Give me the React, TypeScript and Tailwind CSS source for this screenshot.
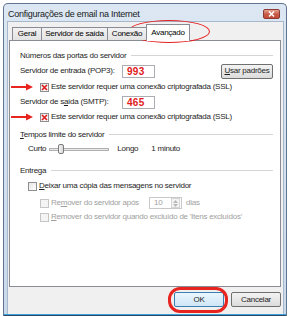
import React from "react";

const font = { fontFamily: '"Liberation Sans", Arial, sans-serif' };

function Check({ checked, disabled }: { checked?: boolean; disabled?: boolean }) {
  return (
    <span
      className={
        "flex h-[9px] w-[9px] shrink-0 items-center justify-center border " +
        (disabled ? "border-[#c5c5c5] bg-[#f4f4f4]" : "border-[#8e8f8f] bg-gradient-to-br from-[#e6e6e6] to-[#ffffff]")
      }
    >
      {checked && (
        <svg width="7" height="7" viewBox="0 0 7 7">
          <path d="M1 1 L6 6 M6 1 L1 6" stroke="#e01b1b" strokeWidth="1.6" />
        </svg>
      )}
    </span>
  );
}

function Arrow({ top }: { top: number }) {
  return (
    <svg className="absolute left-[11px]" style={{ top }} width="24" height="8" viewBox="0 0 24 8">
      <path d="M0 4 H17" stroke="#e8241f" strokeWidth="2" />
      <path d="M15 0.5 L22 4 L15 7.5 Z" fill="#e8241f" />
    </svg>
  );
}

function Header({ text, underline }: { text: string; underline?: boolean }) {
  return (
    <div className="flex h-[12px] items-center gap-[5px] text-[#1e1e1e]">
      <span className="whitespace-nowrap">
        {underline ? (
          <>
            <span className="underline">{text[0]}</span>
            {text.slice(1)}
          </>
        ) : (
          text
        )}
      </span>
      <span className="h-[2px] flex-1 border-t border-b border-t-[#d5d5d5] border-b-white" />
    </div>
  );
}

function Win7Button({ label, primary, u }: { label: string; primary?: boolean; u?: boolean }) {
  return (
    <button
      className={
        "flex h-[15px] w-full items-center justify-center rounded-[2px] border text-[8px] text-[#1e1e1e] " +
        (primary
          ? "border-[#3c7fb1] bg-gradient-to-b from-[#eaf6fd] to-[#cfe6f6]"
          : "border-[#707070] bg-gradient-to-b from-[#f3f3f3] to-[#dcdcdc]")
      }
    >
      {u ? (
        <>
          <span className="underline">{label[0]}</span>
          {label.slice(1)}
        </>
      ) : (
        label
      )}
    </button>
  );
}

export default function App() {
  return (
    <div
      className="relative h-[316px] w-[290px] overflow-hidden bg-white pl-[3px] pt-[3px] text-[8px] tracking-[-0.25px]"
      style={font}
    >
      <div className="flex h-[313px] w-[284px] flex-col rounded-t-[5px] border border-b-0 border-[#5f7590] bg-gradient-to-b from-[#dce7f3] to-[#c9d9ec]">
        {/* title bar */}
        <div className="flex h-[17px] shrink-0 items-start">
          <span className="ml-[4px] mt-[5px] text-[9px] leading-[11px] text-[#1a1a1a]">
            Configurações de email na Internet
          </span>
          <span className="ml-auto mr-[6px] mt-[5px] flex h-[10px] w-[17px] items-center justify-center rounded-[2px] border border-[#8a3b34] bg-gradient-to-b from-[#e8a493] via-[#c75b48] to-[#c44a35]">
            <svg width="7" height="6" viewBox="0 0 7 6">
              <path d="M1 0.5 L6 5.5 M6 0.5 L1 5.5" stroke="white" strokeWidth="1.5" />
            </svg>
          </span>
        </div>

        {/* client */}
        <div className="ml-[3px] mr-[2px] flex flex-1 flex-col border border-b-0 border-[#a7b8cc] bg-[#f0f0f0] pl-[1px]">
          {/* tabs */}
          <div className="relative z-10 ml-[3px] mt-[2px] flex h-[16px] items-end">
            <div className="flex h-[13px] w-[30px] items-center justify-center border border-b-0 border-[#898c95] bg-gradient-to-b from-[#f2f2f2] to-[#e3e3e3]">
              Geral
            </div>
            <div className="-ml-[1px] flex h-[13px] w-[67px] items-center justify-center border border-b-0 border-[#898c95] bg-gradient-to-b from-[#f2f2f2] to-[#e3e3e3]">
              Servidor de saída
            </div>
            <div className="-ml-[1px] flex h-[13px] w-[40px] items-center justify-center border border-b-0 border-[#898c95] bg-gradient-to-b from-[#f2f2f2] to-[#e3e3e3]">
              Conexão
            </div>
            <div className="-mb-[1px] -ml-[1px] flex h-[17px] w-[44px] items-center justify-center border border-b-0 border-[#898c95] bg-white pb-[1px]">
              Avançado
            </div>
          </div>

          {/* panel */}
          <div className="flex h-[247px] w-[272px] flex-col border border-[#898c95] bg-white pl-[10px] pr-[7px] text-[#1e1e1e]">
            <div className="mt-[9px]">
              <Header text="Números das portas do servidor" />
            </div>

            <div className="mt-[2px] flex h-[14px] items-center">
              <span className="w-[102px] whitespace-nowrap">Servidor de entrada (POP3):</span>
              <span className="flex h-[13px] w-[33px] items-center border border-[#abadb3] pl-[4px] text-[10px] font-bold tracking-[0.3px] text-[#e01b1b]">
                993
              </span>
              <div className="ml-auto w-[52px]">
                <Win7Button label="Usar padrões" u />
              </div>
            </div>

            <div className="mt-[3px] flex h-[12px] items-center gap-[2px] pl-[20px]">
              <Check checked />
              <span className="whitespace-nowrap">Este servidor requer uma conexão criptografada (SSL)</span>
            </div>

            <div className="mt-[2px] flex h-[14px] items-center">
              <span className="w-[102px] whitespace-nowrap">
                Servidor de s<span className="underline">a</span>ída (SMTP):
              </span>
              <span className="flex h-[13px] w-[33px] items-center border border-[#abadb3] pl-[4px] text-[10px] font-bold tracking-[0.3px] text-[#e01b1b]">
                465
              </span>
            </div>

            <div className="mt-[2px] flex h-[12px] items-center gap-[2px] pl-[20px]">
              <Check checked />
              <span className="whitespace-nowrap">Este servidor requer uma conexão criptografada (SSL)</span>
            </div>

            <div className="mt-[6px]">
              <Header text="Tempos limite do servidor" underline />
            </div>

            <div className="mt-[2px] flex h-[12px] items-center pl-[8px]">
              <span>Curto</span>
              <div className="relative ml-[3px] flex h-[12px] w-[60px] items-center">
                <span className="h-[3px] w-full border border-[#b0b0b0] bg-[#e7e7e7]" />
                <span className="absolute left-[9px] top-[1px] h-[10px] w-[6px] rounded-[2px] border border-[#7b7b7b] bg-gradient-to-r from-[#f5f5f5] to-[#d8d8d8]" />
              </div>
              <span className="ml-[8px] w-[34px]">Longo</span>
              <span>1 minuto</span>
            </div>

            <div className="mt-[10px]">
              <Header text="Entrega" />
            </div>

            <div className="mt-[3px] flex h-[12px] items-center gap-[2px] pl-[8px]">
              <Check />
              <span className="whitespace-nowrap">
                <span className="underline">D</span>eixar uma cópia das mensagens no servidor
              </span>
            </div>

            <div className="mt-[5px] flex h-[12px] items-center gap-[2px] pl-[20px] text-[#a0a0a0]">
              <Check disabled />
              <span className="w-[96px] whitespace-nowrap">
                Re<span className="underline">m</span>over do servidor após
              </span>
              <span className="flex h-[12px] w-[33px] items-center border border-[#c8c8c8] pl-[4px]">
                <span className="flex-1">10</span>
                <span className="mr-[1px] flex h-[10px] w-[9px] flex-col border border-[#d5d5d5] bg-[#f4f4f4]">
                  <span className="flex flex-1 items-center justify-center">
                    <svg width="5" height="3" viewBox="0 0 5 3">
                      <path d="M0 3 L2.5 0 L5 3 Z" fill="#b8b8b8" />
                    </svg>
                  </span>
                  <span className="flex flex-1 items-center justify-center">
                    <svg width="5" height="3" viewBox="0 0 5 3">
                      <path d="M0 0 L2.5 3 L5 0 Z" fill="#b8b8b8" />
                    </svg>
                  </span>
                </span>
              </span>
              <span className="ml-[2px]">dias</span>
            </div>

            <div className="mt-[2px] flex h-[12px] items-center gap-[2px] pl-[20px] text-[#a0a0a0]">
              <Check disabled />
              <span className="whitespace-nowrap">
                <span className="underline">R</span>emover do servidor quando excluído de 'Itens excluídos'
              </span>
            </div>
          </div>

          {/* buttons */}
          <div className="flex flex-1 items-start justify-end gap-[7px] pr-[2px] pt-[5px]">
            <div className="w-[50px]">
              <Win7Button label="OK" primary />
            </div>
            <div className="w-[50px]">
              <Win7Button label="Cancelar" />
            </div>
          </div>
        </div>
        <div className="h-[1px] shrink-0 bg-[#3aa0d8]" />
        <div className="h-[1px] shrink-0 bg-[#2c4a66]" />
      </div>

      {/* annotations */}
      <Arrow top={83} />
      <Arrow top={113} />
      <div className="absolute left-[128px] top-[20px] h-[23px] w-[82px] rounded-[50%] border-[1.5px] border-[#e52222]" />
      <div className="absolute left-[168px] top-[287px] h-[26px] w-[60px] rounded-[12px] border-[3px] border-[#e8241f]" />
    </div>
  );
}
